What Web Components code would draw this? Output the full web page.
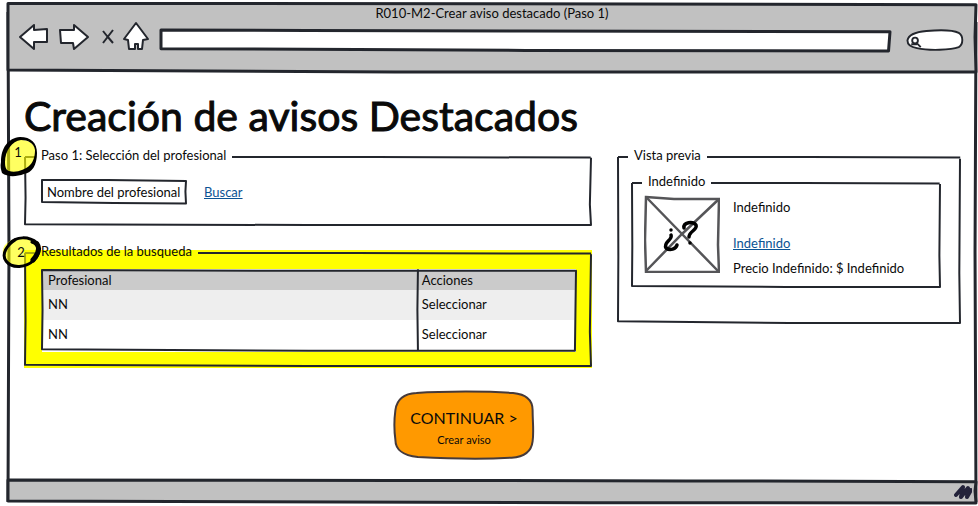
<!DOCTYPE html>
<html lang="es">
<head>
<meta charset="utf-8">
<meta name="viewport" content="width=device-width, initial-scale=1">
<title>R010-M2-Crear aviso destacado (Paso 1)</title>
<style>
  body { margin: 0; background: #fff; color: #0a0a0a; font: 13px/18px Lato, "Open Sans", sans-serif; }
</style>
</head>
<body>
<notice-wizard></notice-wizard>

<script>
const define = (name, html, setup) => {
  const template = document.createElement('template');
  template.innerHTML = html;
  customElements.define(name, class extends HTMLElement {
    constructor() {
      super();
      this.attachShadow({ mode: 'open' }).append(template.content.cloneNode(true));
    }
    connectedCallback() { if (setup) setup(this, this.shadowRoot); }
  });
};

/* A hand-drawn stroke stretched over its parent. Path units run 0-100 on both axes. */
define('sketch-line', `
  <style>
    :host { position: absolute; inset: 0; pointer-events: none; color: #23262d; }
    svg { display: block; width: 100%; height: 100%; overflow: visible; }
    path { fill: var(--sketch-fill, none); stroke: currentColor; stroke-width: var(--sketch-width, 2px); stroke-linejoin: round; vector-effect: non-scaling-stroke; }
  </style>
  <svg viewBox="0 0 100 100" preserveAspectRatio="none" aria-hidden="true"><path/></svg>`,
  (host, root) => root.querySelector('path').setAttribute('d', host.getAttribute('path')));

define('numbered-mark', `
  <style>
    :host { display: grid; width: 40px; height: 40px; place-items: center; }
    svg, span { grid-area: 1 / 1; }
    svg { width: 40px; height: 40px; overflow: visible; }
    span { position: relative; }
    .two { display: none; }
    :host([shape="flat"]) .one { display: none; }
    :host([shape="flat"]) .two { display: block; }
    :host([shape="round"]) span { padding: 0 4px 10px 0; }
    :host([shape="flat"]) span { padding: 0 2px 2px 0; }
  </style>
  <svg class="one" viewBox="0 0 40 40" aria-hidden="true">
    <path d="M3 14C6 5 14 1 23 3C33 4 37 11 36 19C36 28 32 35 23 37C13 40 5 34 3 26Z" fill="#ff0" fill-opacity=".62"/>
    <path d="M1 25C1 11 8 1 20 0C31 0 37 6 37 16C37 28 32 36 24 37C16 40 7 40 2 36C1 33 0 29 1 25ZM5 25C5 30 6 33 9 34C16 36 25 33 30 28C34 24 35 18 35 13C34 6 28 3 21 3C12 4 5 14 5 25Z" fill="#000" fill-rule="evenodd"/>
  </svg>
  <svg class="two" viewBox="0 0 40 40" aria-hidden="true">
    <path d="M3 12C10 4 22 3 30 8C40 13 38 24 33 29C25 36 9 36 3 28C0 22 0 16 3 12Z" fill="#ff0" fill-opacity=".62"/>
    <path d="M7 11C14 3 27 3 35 10" fill="none" stroke="#000" stroke-width="3" stroke-linecap="round"/>
    <path d="M13 7C5 12 -1 21 4 28C10 36 24 35 32 27C39 20 38 12 30 9" fill="none" stroke="#000" stroke-width="3" stroke-linecap="round"/>
    <path d="M35 11C38 15 37 20 31 27" fill="none" stroke="#000" stroke-width="5" stroke-linecap="round"/>
  </svg>
  <span><slot></slot></span>`);

define('field-group', `
  <style>
    :host { display: block; position: relative; }
    [role=group] { position: relative; }
    .edges { position: absolute; inset: 11px 1px 1px; }
    .fill { position: absolute; inset: 8px 0 -1px; background: var(--group-fill, none); }
    .top { position: relative; display: flex; padding: 0 1px; }
    .stub { position: relative; flex: none; width: 10px; margin-right: 6px; }
    .rest { position: relative; flex: 1; margin-left: 6px; }
    .stub sketch-line, .rest sketch-line { top: 11px; height: 1px; bottom: auto; }
    .body { position: relative; padding: var(--group-pad, 0); }
    ::slotted([slot=mark]) { position: absolute; left: var(--mark-x, -24px); top: -9px; }
  </style>
  <div role="group" aria-labelledby="legend">
    <div class="fill"></div>
    <div class="edges"><sketch-line path="M0 0L.1 60L0 99L50 100L100 100L99.8 70L100 1"></sketch-line></div>
    <div class="top">
      <div class="stub"><sketch-line path="M0 0L100 0"></sketch-line></div>
      <div id="legend"><slot name="legend"></slot></div>
      <div class="rest"><sketch-line path="M0 0L40 0L100 60"></sketch-line></div>
    </div>
    <div class="body"><slot></slot></div>
  </div>
  <slot name="mark"></slot>`);

define('browser-bar', `
  <style>
    :host { display: block; position: relative; height: 70px; }
    header { position: relative; display: flex; flex-direction: column; }
    .title { text-align: center; padding-top: 2px; }
    .row { display: flex; align-items: center; height: 28px; padding: 0 12px 0 11px; }
    button { flex: none; margin: 0; padding: 0; border: 0; background: none; display: block; height: 28px; }
    svg { display: block; width: 100%; height: 100%; overflow: visible; fill: #fff; stroke: #23262d; stroke-width: 2; stroke-linejoin: round; }
    .back { width: 30px; margin-right: 10px; }
    .next { width: 30px; margin-right: 12px; }
    .stop { width: 14px; margin-right: 8px; }
    .home { width: 26px; margin-right: 12px; }
    label { position: relative; display: block; height: 19px; margin-top: 8px; }
    .address { flex: 1; margin-right: 16px; --sketch-width: 3px; --sketch-fill: #fff; }
    .search { flex: none; width: 58px; }
    .search svg { position: absolute; inset: 0; }
    input { position: relative; box-sizing: border-box; width: 100%; height: 100%; border: 0; background: none; font: inherit; padding: 0 8px; outline: 0; display: block; }
    .search input { padding-left: 18px; }
  </style>
  <sketch-line style="--sketch-fill:#c1c1c1;--sketch-width:3px" path="M0 2L50 2.5L100 4L99.9 50L100 100L40 100L0 97L0 50Z"></sketch-line>
  <header>
    <div class="title"><slot></slot></div>
    <div class="row">
      <button class="back" aria-label="Atrás"><svg viewBox="0 0 30 28" stroke-width="1"><path d="M1 15L15 3L15 8L28 7L28 20L15 20L15 27Z"/></svg></button>
      <button class="next" aria-label="Adelante"><svg viewBox="0 0 30 28"><path d="M1 8L15 8L15 3L29 15L15 27L14 21L2 21Z"/></svg></button>
      <button class="stop" aria-label="Detener"><svg viewBox="0 0 14 28"><path d="M2 21L12 8M2 9L6 14L12 21" fill="none"/></svg></button>
      <button class="home" aria-label="Inicio"><svg viewBox="0 0 26 28"><path d="M13 1L25 17L20 18L19 27L15 27L15 22L12 22L12 27L6 27L5 18L1 17Z"/></svg></button>
      <label class="address"><sketch-line path="M0 -5L20 -3L50 0L100 4L99.8 105L50 102L0 93Z"></sketch-line><input type="text" aria-label="Dirección"></label>
      <label class="search">
        <svg viewBox="0 0 58 20" aria-hidden="true"><path d="M0 10C1 4 8 1 20 0C32-1 48 -1 54 2C59 5 59 14 54 17C46 20 23 21 10 18C4 17 0 15 0 10Z"/><circle cx="8" cy="10" r="3"/><path d="M4 14L10 14M10 13L14 17"/></svg>
        <input type="search" aria-label="Buscar en la web">
      </label>
    </div>
  </header>`);

define('status-bar', `
  <style>
    :host { display: flex; position: relative; height: 22px; align-items: center; justify-content: flex-end; padding-right: 4px; }
    svg { position: relative; width: 18px; height: 16px; }
  </style>
  <sketch-line style="--sketch-fill:#c1c1c1;--sketch-width:3px" path="M0 0L40 2L70 4L100 8L99.9 50L100 104L60 103L0 96Z"></sketch-line>
  <svg viewBox="0 0 18 16" aria-hidden="true"><path d="M2 12L9 4L7 14L14 5L13 14L17 7" fill="none" stroke="#23223a" stroke-width="4" stroke-linejoin="round" stroke-linecap="round"/></svg>`);

define('professional-search', `
  <style>
    :host { display: flex; align-items: center; gap: 18px; }
    label { position: relative; width: 144px; height: 23px; --sketch-fill: #fff; }
    input { position: relative; box-sizing: border-box; width: 100%; height: 100%; border: 0; background: none; color: inherit; font: inherit; padding: 0 5px; outline: 0; display: block; }
    a { color: #0b5394; }
  </style>
  <label><sketch-line path="M0 0L45 0L100 4L99.6 50L100 102L50 100L0 96Z"></sketch-line><input type="text" aria-label="Nombre del profesional" value="Nombre del profesional"></label>
  <a href="#buscar">Buscar</a>`);

define('results-table', `
  <style>
    :host { display: block; position: relative; border-top: 1px solid #fff; border-bottom: 2px solid #fff; background: #fff; }
    table { width: 100%; border-collapse: collapse; table-layout: fixed; }
    th, td { text-align: left; font-weight: 400; padding: 0 6px; height: 30px; vertical-align: top; line-height: 28px; }
    th { height: 20px; line-height: 20px; background: #cbcbcb; }
    th:first-child { width: 70%; box-sizing: border-box; }
    tbody tr:nth-child(odd) { background: #eee; }
  </style>
  <table>
    <thead><tr><th scope="col">Profesional</th><th scope="col">Acciones</th></tr></thead>
    <tbody><tr><td>NN</td><td>Seleccionar</td></tr><tr><td>NN</td><td>Seleccionar</td></tr></tbody>
  </table>
  <sketch-line path="M0 0L50 1L100 1L99.9 50L99.8 101L50 101L0 99L.1 50ZM70.4 -1L70.3 50L70.4 100"></sketch-line>`);

define('notice-preview', `
  <style>
    :host { display: flex; gap: 13px; }
    svg { flex: none; display: block; width: 76px; height: 78px; }
    .info { padding-top: 3px; min-width: 0; }
    p { margin: 0; }
    .name { margin-bottom: 18px; }
    .link { margin-bottom: 7px; }
    a { color: #0b5394; }
  </style>
  <svg viewBox="0 0 76 78" role="img" aria-label="Sin imagen">
    <g fill="none" stroke="#555558" stroke-width="2.500"><path d="M2 2L30 4L75 4L74 50L75 77L50 77L2 77L1 45Z"/><path d="M2 2L38 39L75 77M75 4L38 39L2 76"/></g>
    <g fill="none" stroke="#000" stroke-width="3.500" stroke-linecap="round" stroke-linejoin="round"><path d="M40 33C39 27 49 26 52 30C54 35 45 36 45 42M46 48L46 48"/><path d="M27 35L27 35M27 40C29 45 19 47 22 53C26 56 32 54 33 50"/></g>
  </svg>
  <div class="info">
    <p class="name">Indefinido</p>
    <p class="link"><a href="#indefinido">Indefinido</a></p>
    <p>Precio Indefinido: $ Indefinido</p>
  </div>`);

define('continue-button', `
  <style>
    :host { display: block; }
    button { position: relative; display: block; width: 100%; height: 68px; margin: 0; padding: 6px 0 0; border: 0; background: none; color: inherit; font: inherit; --sketch-fill: #f90; }
    sketch-line { color: #463a3a; }
    strong, small { position: relative; display: block; }
    strong { font-weight: 400; font-size: 16px; line-height: 24px; }
    small { font-size: 11px; line-height: 20px; }
  </style>
  <button type="button">
    <sketch-line path="M1 28C2 13 7 4 16 3C35 0 68 0 85 3C95 5 99 15 99 28C99 45 100 60 99 74C98 91 92 97 84 98C60 101 35 99 17 97C6 95 1 85 1 72C0 57 0 43 1 28Z"></sketch-line>
    <strong>CONTINUAR &gt;</strong><small>Crear aviso</small>
  </button>`);

define('notice-wizard', `
  <style>
    :host { display: flex; box-sizing: border-box; min-height: 100vh; padding: 2px 2px 4px 8px; }
    .window { position: relative; flex: 1; display: flex; flex-direction: column; }
    .side { --sketch-width: 3px; }
    main { position: relative; flex: 1; padding: 20px 15px 20px 16px; }
    h1 { margin: 0 0 6px; font-size: 41px; line-height: 48px; font-weight: 400; -webkit-text-stroke: 1px; }
    .columns { display: grid; grid-template-columns: 568fr 344fr; gap: 25px; align-items: start; }
    .steps { display: grid; gap: 16px; }
    .search { --group-pad: 16px 17px 23px 18px; }
    .results { --group-fill: #ff0; --group-pad: 9px 16px 15px 18px; --mark-x: -22px; }
    .preview { --group-pad: 8px 20px 36px 14px; }
    .card { --group-pad: 5px 13px 15px 13px; }
    .preview .card { --group-pad: 5px 13px 11px 13px; }
    .actions { display: grid; grid-template-columns: 370fr 140px 427fr; margin-top: 24px; }
    continue-button { grid-column: 2; }
  </style>
  <div class="window">
    <sketch-line class="side" path="M0 2L.1 50L0 100M100 4L99.9 50L100 100"></sketch-line>
    <browser-bar>R010-M2-Crear aviso destacado (Paso 1)</browser-bar>
    <main>
      <h1>Creación de avisos Destacados</h1>
      <div class="columns">
        <div class="steps">
          <field-group class="search"><span slot="legend">Paso 1: Selección del profesional</span><professional-search></professional-search><numbered-mark slot="mark" shape="round">1</numbered-mark></field-group>
          <field-group class="results"><span slot="legend">Resultados de la busqueda</span><results-table></results-table><numbered-mark slot="mark" shape="flat">2</numbered-mark></field-group>
        </div>
        <field-group class="preview"><span slot="legend">Vista previa</span>
          <field-group class="card"><span slot="legend">Indefinido</span><notice-preview></notice-preview></field-group>
        </field-group>
      </div>
      <div class="actions"><continue-button></continue-button></div>
    </main>
    <status-bar></status-bar>
  </div>`);
</script>
</body>
</html>
